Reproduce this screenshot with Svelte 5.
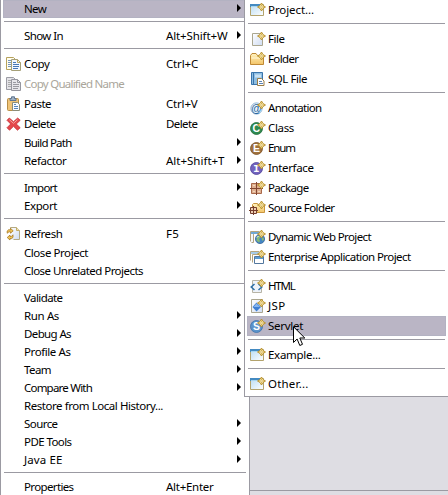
<script>
  const sep = { sep: true };
  const main = [
    { t: 'New', w: 22, arrow: true, on: true }, sep,
    { t: 'Show In', w: 39, key: 'Alt+Shift+W', kw: 61.5, arrow: true }, sep,
    { t: 'Copy', w: 25.5, key: 'Ctrl+C', kw: 32, icon: 'copy' },
    { t: 'Copy Qualified Name', w: 100, icon: 'copyoff', off: true },
    { t: 'Paste', w: 27, key: 'Ctrl+V', kw: 31.5, icon: 'paste' },
    { t: 'Delete', w: 31.5, key: 'Delete', kw: 31.5, icon: 'delete' },
    { t: 'Build Path', w: 47.5, arrow: true },
    { t: 'Refactor', w: 42.5, key: 'Alt+Shift+T', kw: 58.5, arrow: true }, sep,
    { t: 'Import', w: 33, arrow: true },
    { t: 'Export', w: 33, arrow: true }, sep,
    { t: 'Refresh', w: 38.5, key: 'F5', kw: 13, icon: 'refresh' },
    { t: 'Close Project', w: 64 },
    { t: 'Close Unrelated Projects', w: 119 }, sep,
    { t: 'Validate', w: 38.5 },
    { t: 'Run As', w: 35, arrow: true },
    { t: 'Debug As', w: 47, arrow: true },
    { t: 'Profile As', w: 46.5, arrow: true },
    { t: 'Team', w: 27, arrow: true },
    { t: 'Compare With', w: 68, arrow: true },
    { t: 'Restore from Local History...', w: 139 },
    { t: 'Source', w: 33.5, arrow: true },
    { t: 'PDE Tools', w: 47.5, arrow: true },
    { t: 'Java EE', w: 38.5, arrow: true }, sep,
    { t: 'Properties', w: 49.5, key: 'Alt+Enter', kw: 47.5 }
  ];
  const sub = [
    { t: 'Project...', w: 46, icon: 'project' }, sep,
    { t: 'File', w: 16.5, icon: 'file' },
    { t: 'Folder', w: 30.5, icon: 'folder' },
    { t: 'SQL File', w: 39, icon: 'sql' }, sep,
    { t: 'Annotation', w: 53.5, icon: 'annotation' },
    { t: 'Class', w: 26, icon: 'class' },
    { t: 'Enum', w: 27, icon: 'enum' },
    { t: 'Interface', w: 45.5, icon: 'interface' },
    { t: 'Package', w: 40.5, icon: 'package' },
    { t: 'Source Folder', w: 66.5, icon: 'source' }, sep,
    { t: 'Dynamic Web Project', w: 103, icon: 'web' },
    { t: 'Enterprise Application Project', w: 142.5, icon: 'ear' }, sep,
    { t: 'HTML', w: 26.5, icon: 'html' },
    { t: 'JSP', w: 17.5, icon: 'jsp' },
    { t: 'Servlet', w: 35, icon: 'servlet', on: true }, sep,
    { t: 'Example...', w: 52.5, icon: 'project' }, sep,
    { t: 'Other...', w: 40.5, icon: 'project' }
  ];
  const discs = {
    class: ['#2f8a4f', '#1f6b3a', 'C'],
    enum: ['#a0713d', '#7a4f22', 'E'],
    interface: ['#7263bd', '#4d3f98', 'I'],
    servlet: ['#5b93cb', '#3a70ab', 'S']
  };

  function fit(node, width) {
    const natural = node.getBoundingClientRect().width;
    node.style.letterSpacing = `${(width - natural) / node.textContent.length}px`;
  }
</script>

{#snippet star()}
  <path d="M11.500 1L13 3.500l2.500 1.500-2.500 1.500-1.500 2.500L10 6.500 7.500 5 10 3.500z" fill="#fdf0b4" stroke="#b48a24" stroke-width=".9" />
  <path d="M11.500 2.500v5M9 5h5" stroke="#c9a13c" stroke-width=".8" />
  <path d="M11 4.500h1v1h-1z" fill="#fff" />
{/snippet}

{#snippet icon(name)}
  <svg class="icon" width="16" height="16" viewBox="0 0 16 16" fill="none">
    <defs>
      <linearGradient id="paper" x2="1" y2="1"><stop stop-color="#fff" /><stop offset="1" stop-color="#cfdcf2" /></linearGradient>
      <linearGradient id="gold" x2="0" y2="1"><stop stop-color="#fff3c0" /><stop offset="1" stop-color="#f3c467" /></linearGradient>
      <linearGradient id="sky" x2="1" y2="1"><stop stop-color="#b9dcf3" /><stop offset="1" stop-color="#fff" /></linearGradient>
    </defs>
    {#if name === 'copy' || name === 'copyoff'}
      {@const c = name === 'copy'}
      <path d="M.5 1.500h7l2 2v10h-9z" fill={c ? '#fffdf0' : '#e4e3e8'} stroke={c ? '#b8a35c' : '#9c9ca4'} />
      <path d="M2 4.500h3M2 6.500h3M2 8.500h3M2 10.500h3" stroke={c ? '#7795bd' : '#aaa'} />
      <path d="M5.500 3.500h6l3 3v8h-9z" fill={c ? '#f2f7ff' : '#e7e6ea'} stroke={c ? '#a6a078' : '#96969e'} />
      <path d="M11.500 3.500v3h3" stroke={c ? '#b8a35c' : '#96969e'} />
      <path d="M7 6.500h3M7 8.500h6M7 10.500h6M7 12.500h5" stroke={c ? '#4777b5' : '#9999a0'} />
    {:else if name === 'paste'}
      <rect x="1.500" y="2.500" width="11" height="12" rx="1" fill="#f0c478" stroke="#b78e48" />
      <path d="M4 4.500V2.500h1.500V.8h3v1.700H10v2z" fill="#9eb1c4" stroke="#5f7590" />
      <path d="M6.500 6.500h5l2 2v6h-7z" fill="#f8fbff" stroke="#8b8c78" />
      <path d="M8 8.500h2M8 10.500h4M8 12.500h4" stroke="#5785bc" />
    {:else if name === 'delete'}
      <path d="M3.300 2l4.200 3.700L11.700 2l2.500 2.300L10.300 8l3.900 3.700-2.700 2.500-4-3.900-4 3.900L1 11.700 4.700 8 1 4.300z" fill="#e5474b" stroke="#c22c36" stroke-width=".8" />
      <path d="M3.300 3.700l4.200 3.600 4-3.600" stroke="#f6a09d" />
    {:else if name === 'refresh'}
      <path d="M4.500 1.500h6l3 3v9h-9z" fill="url(#paper)" />
      <path d="M4.500 3V1.500h6l3 3v9h-6" stroke="#b5aa82" />
      <path d="M10.500 1.500v3h3" fill="#f0e2ae" stroke="#c2ac66" />
      <path d="M1.200 7.200V5l1.300-1.200h2V2.300L7.200 4.800 4.500 7.200V5.800h-1.500zM7 8.800v2.600L5.600 12.500h-1.600V14L1.200 11.500 4 9.100v1.400h1.400z" fill="#f0c458" stroke="#a87822" stroke-width=".8" />
    {:else if name === 'file'}
      <path d="M2.500 2.500h10v12h-10z" fill="url(#paper)" stroke="#aaa68f" />
      {@render star()}
    {:else if name === 'folder'}
      <path d="M.5 13.500v-9l1.500-2h4l1.500 2h6v9z" fill="url(#gold)" stroke="#bf8935" />
      <path d="M1.500 7h11" stroke="#fff8d9" />
      {@render star()}
    {:else if name === 'sql'}
      <path d="M1.500 1.500h11v12h-11z" fill="#8ebee2" stroke="#3975ac" />
      <path d="M3.500 2v11" stroke="#3975ac" /><path d="M5 3.500h6v3H5z" fill="#c8e2f4" />
      <path d="M7.500 7.500h4l2.500 2.500v4.500H7.500z" fill="#fff" stroke="#9b7d46" />
      <path d="M9 10.500h3M9 12.500h4" stroke="#5b84b5" />
    {:else if name === 'annotation'}
      <circle cx="6.500" cy="8.500" r="5.600" fill="#eef6fd" stroke="#8ab4d8" stroke-width="1" />
      <text x="6.400" y="11.600" text-anchor="middle" font-size="10.500" font-weight="bold" fill="#27689f">@</text>
      {@render star()}
    {:else if discs[name]}
      <circle cx="6.500" cy="8.500" r="6" fill={discs[name][0]} stroke={discs[name][1]} stroke-width=".8" />
      <text class={name === 'interface' ? 'slab' : ''} x="6.400" y="12.300" text-anchor="middle" font-size="10.500" font-weight="bold" fill="#fff">{discs[name][2]}</text>
      {@render star()}
    {:else if name === 'package'}
      <path d="M1.500 3.500h10v10h-10z" fill="#dfb091" stroke="#a9694b" />
      <path d="M6.500 2v13M0 8.500h13" stroke="#824631" /><path d="M3 5.500h2M8 5.500h2M3 11.500h2M8 11.500h2" stroke="#f3d7bd" />
      {@render star()}
    {:else if name === 'source'}
      <path d="M2.500 12.500v-8l1-1h4l1.500 2h5.500v7z" fill="url(#gold)" stroke="#c9953e" />
      <path d="M.5 7.500h6v6h-6z" fill="#efd0b5" stroke="#753e2d" />
      <path d="M3.500 6v9M-1 10.500h9" stroke="#753e2d" />
      {@render star()}
    {:else if name === 'web'}
      <path d="M.5 12.500v-10h9v2h-6v9H1.500" fill="#f4f7fb" stroke="#b3a57f" />
      <path d="M1 3h8v2H1z" fill="#71a9d6" />
      <circle cx="10" cy="10" r="4.600" fill="#4385c4" stroke="#3a669c" stroke-width=".8" />
      <path d="M7 7.500l2.500-1 1 2-1.500 1.500 1 2-1 1.500-2.500-2zM11.500 9.500l2-1 .5 2-1.500 1.500z" fill="#86b974" />
      <path d="M7 8.500l1.500-1.500" stroke="#fff" />
      {@render star()}
    {:else if name === 'ear'}
      <path d="M.5 11.500v-9h9M2.500 13.500v-8h7" stroke="#b3a57f" />
      <path d="M1 3h8v2H1z" fill="#a5cbe8" />
      <path d="M4.500 7.500h9v7h-9z" fill="#fff" stroke="#52779e" /><path d="M5 8h8v2H5z" fill="#5b9bd0" />
      {@render star()}
    {:else if name === 'html'}
      <path d="M2.500 2.500h9v12h-9z" fill="#eef3fa" stroke="#b7b4a6" />
      <path d="M4.500 6L1.200 9l3.300 3M8.500 6l3.300 3-3.300 3" stroke="#2d70a9" stroke-width="1.500" />
      {@render star()}
    {:else if name === 'jsp'}
      <path d="M1.500 1.500h11v13h-11z" fill="url(#paper)" stroke="#aaa68f" />
      <path d="M6.500 4.500l4.500 4.500-4.500 4.500L2.500 9z" fill="#3e7fd2" />
      <path d="M6.500 5.500L10 9H3.500z" fill="#86b5ed" />
      {@render star()}
    {:else}
      <path d="M.5 2.500h13v11H.5z" fill="url(#sky)" stroke="#b3a36d" />
      <path d="M0 2h10v3H0z" fill="#438ac1" /><path d="M1 4.500h9" stroke="#a9d6ef" />
      {@render star()}
    {/if}
  </svg>
{/snippet}

{#snippet rows(items)}
  {#each items as item}
    {#if item.sep}
      <div class="sep"></div>
    {:else}
      <div class="row" class:tall={item.icon} class:on={item.on} class:off={item.off}>
        <span class="gutter">{#if item.icon}{@render icon(item.icon)}{/if}</span>
        <span class="label"><span use:fit={item.w}>{item.t}</span></span>
        <span class="key">{#if item.key}<span use:fit={item.kw}>{item.key}</span>{/if}</span>
        {#if item.arrow}
          <svg class="arrow" width="4" height="8" viewBox="0 0 4 8"><path d="M0 0l4 4-4 4z" fill="#000" /></svg>
        {/if}
      </div>
    {/if}
  {/each}
{/snippet}

<div class="desk">
  <div class="menu main">{@render rows(main)}</div>
  <div class="editor"></div>
  <div class="menu sub">{@render rows(sub)}</div>
  <svg class="cursor" width="13" height="21" viewBox="0 0 13 21">
    <path d="M.5 .8v15.700l3.600-3.500 2.700 6.500 2.700-1.200-2.700-6.300h5z" fill="#fff" stroke="#000" />
  </svg>
</div>

<style>
  .desk {
    position: relative;
    display: flex;
    width: 448px;
    height: 495px;
    overflow: hidden;
    background: #dedde3;
    font: 11.5px/18px "Noto Sans", sans-serif;
    color: #000;
  }
  .menu {
    box-sizing: border-box;
    background: #fff;
    border: 0 solid #9b9aa2;
  }
  .main {
    flex: none;
    width: 250px;
    height: 496px;
    padding: 0 2px;
    border-width: 0 1px;
  }
  .editor {
    flex: 1;
    height: 490px;
    border-bottom: 1px solid #9b9aa2;
  }
  .sub {
    position: absolute;
    left: 244px;
    top: 0;
    width: 205px;
    height: 397px;
    padding: 0 3px 0 2px;
    border-width: 0 0 1px 1px;
  }
  .row {
    display: flex;
    align-items: center;
    height: 18px;
    white-space: pre;
  }
  .tall { height: 20px; }
  .on {
    background: #bab5c5;
    box-shadow: inset 0 0 0 1px #b3b2c2;
  }
  .off { color: #aaa69b; }
  .gutter {
    flex: none;
    display: flex;
    width: 18px;
    padding-left: 3px;
  }
  .icon { flex: none; overflow: visible; }
  .label { flex: none; width: 142px; }
  .key { flex: none; width: 71px; }
  .sub .label { width: auto; }
  .sub .key { display: none; }
  .arrow { flex: none; margin-bottom: 2px; }
  .sep {
    height: 1px;
    margin: 0 1px;
    border: solid #fff;
    border-width: 3px 0 5px;
    background: #9b9aa2;
  }
  text { font-family: "Liberation Sans", sans-serif; }
  .slab { font-family: "Liberation Mono", monospace; }
  .cursor {
    position: absolute;
    left: 293px;
    top: 326px;
  }
</style>
